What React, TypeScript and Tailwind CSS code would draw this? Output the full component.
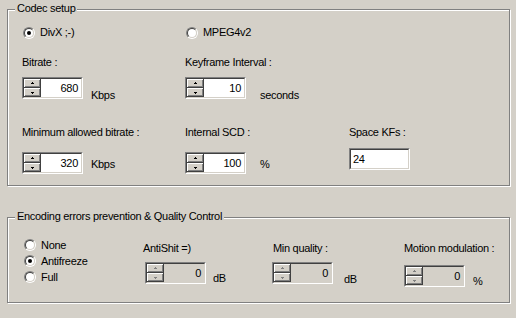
import React from 'react';

const txt = "font-['Liberation_Sans',Arial,sans-serif] text-[11px] leading-[13px] tracking-[-0.3px] text-black";

function Radio({ checked }: { checked?: boolean }) {
  return (
    <span className="inline-block w-[12px] h-[12px] shrink-0 rounded-full border border-t-[#808080] border-l-[#808080] border-r-white border-b-white">
      <span className="flex w-[10px] h-[10px] items-center justify-center rounded-full border border-t-[#404040] border-l-[#404040] border-r-[#d4d0c8] border-b-[#d4d0c8] bg-white">
        {checked && <span className="w-[4px] h-[4px] rounded-full bg-black" />}
      </span>
    </span>
  );
}

function RadioItem({ label, checked, className = '' }: { label: string; checked?: boolean; className?: string }) {
  return (
    <div className={`flex items-center gap-[5px] ${className}`}>
      <Radio checked={checked} />
      <span className={txt}>{label}</span>
    </div>
  );
}

function Sunken({ className = '', disabled, children }: { className?: string; disabled?: boolean; children?: React.ReactNode }) {
  return (
    <div className={`border border-t-[#808080] border-l-[#808080] border-r-white border-b-white ${className}`}>
      <div
        className={`h-full border border-t-[#404040] border-l-[#404040] border-r-[#d4d0c8] border-b-[#d4d0c8] ${
          disabled ? 'bg-[#d4d0c8]' : 'bg-white'
        }`}
      >
        {children}
      </div>
    </div>
  );
}

function Arrow({ up, disabled }: { up?: boolean; disabled?: boolean }) {
  const fill = disabled ? '#808080' : '#000';
  return (
    <svg width="5" height="3" viewBox="0 0 5 3" shapeRendering="crispEdges">
      {up ? (
        <>
          <rect x="2" y="0" width="1" height="1" fill={fill} />
          <rect x="1" y="1" width="3" height="1" fill={fill} />
        </>
      ) : (
        <>
          <rect x="1" y="1" width="3" height="1" fill={fill} />
          <rect x="2" y="2" width="1" height="1" fill={fill} />
        </>
      )}
    </svg>
  );
}

function SpinButton({ up, disabled }: { up?: boolean; disabled?: boolean }) {
  return (
    <div className="flex h-[9px] items-center justify-center bg-[#d4d0c8] shadow-[inset_-1px_-1px_0_#404040,inset_1px_1px_0_#fff,inset_-2px_-2px_0_#808080]">
      <Arrow up={up} disabled={disabled} />
    </div>
  );
}

function Spin({ value, disabled, className = '' }: { value: string; disabled?: boolean; className?: string }) {
  return (
    <Sunken className={`w-[61px] h-[22px] shrink-0 ${className}`} disabled={disabled}>
      <div className="flex h-full">
        <div className="flex w-[17px] flex-col">
          <SpinButton up disabled={disabled} />
          <SpinButton disabled={disabled} />
        </div>
        <div className={`flex flex-1 items-center justify-end pr-[3px] ${txt} ${disabled ? 'text-[#808080]' : ''}`}>
          {value}
        </div>
      </div>
    </Sunken>
  );
}

function GroupBox({ title, className = '', children }: { title: string; className?: string; children?: React.ReactNode }) {
  return (
    <div className={`relative ml-[7px] w-[503px] border border-[#808080] shadow-[inset_1px_1px_0_#fff,1px_1px_0_#fff] ${className}`}>
      <span className={`absolute left-[7px] top-[-8px] bg-[#d4d0c8] px-[2px] ${txt}`}>{title}</span>
      {children}
    </div>
  );
}

export default function App() {
  return (
    <div className="w-[516px] h-[318px] overflow-hidden bg-[#d4d0c8] pt-[9px]">
      <GroupBox title="Codec setup" className="h-[177px]">
        <div className="grid grid-cols-[163px_164px_1fr] pl-[14px]">
          <RadioItem label="DivX ;-)" checked className="ml-[1px] mt-[16px] h-[13px]" />
          <RadioItem label="MPEG4v2" className="ml-[1px] mt-[16px] h-[13px]" />
          <div />

          <span className={`mt-[17px] ${txt}`}>Bitrate :</span>
          <span className={`mt-[17px] ${txt}`}>Keyframe Interval :</span>
          <div />

          <div className="mt-[8px] flex items-start">
            <Spin value="680" />
            <span className={`ml-[8px] mt-[12px] ${txt}`}>Kbps</span>
          </div>
          <div className="mt-[8px] flex items-start">
            <Spin value="10" />
            <span className={`ml-[14px] mt-[12px] ${txt}`}>seconds</span>
          </div>
          <div />

          <span className={`mt-[24px] ${txt}`}>Minimum allowed bitrate :</span>
          <span className={`mt-[24px] ${txt}`}>Internal SCD :</span>
          <span className={`mt-[24px] ${txt}`}>Space KFs :</span>

          <div className="mt-[13px] flex items-start">
            <Spin value="320" />
            <span className={`ml-[8px] mt-[6px] ${txt}`}>Kbps</span>
          </div>
          <div className="mt-[13px] flex items-start">
            <Spin value="100" />
            <span className={`ml-[14px] mt-[6px] ${txt}`}>%</span>
          </div>
          <div className="mt-[9px]">
            <Sunken className="w-[61px] h-[22px]">
              <div className={`flex h-full items-center pl-[2px] ${txt}`}>24</div>
            </Sunken>
          </div>
        </div>
      </GroupBox>

      <GroupBox title="Encoding errors prevention & Quality Control" className="mt-[31px] h-[86px]">
        <div className="flex pl-[16px]">
          <div className="mt-[19px] flex w-[119px] flex-col">
            <RadioItem label="None" className="h-[16px]" />
            <RadioItem label="Antifreeze" checked className="h-[16px]" />
            <RadioItem label="Full" className="h-[16px]" />
          </div>

          <div className="mt-[24px] flex w-[129px] flex-col">
            <span className={txt}>AntiShit =)</span>
            <div className="mt-[7px] ml-[2px] flex items-start">
              <Spin value="0" disabled />
              <span className={`ml-[7px] mt-[10px] ${txt}`}>dB</span>
            </div>
          </div>

          <div className="mt-[24px] flex w-[132px] flex-col">
            <span className={`ml-[1px] ${txt}`}>Min quality :</span>
            <div className="mt-[7px] flex items-start">
              <Spin value="0" disabled />
              <span className={`ml-[11px] mt-[11px] ${txt}`}>dB</span>
            </div>
          </div>

          <div className="mt-[24px] flex flex-col">
            <span className={txt}>Motion modulation :</span>
            <div className="mt-[10px] flex items-start">
              <Spin value="0" disabled />
              <span className={`ml-[8px] mt-[10px] ${txt}`}>%</span>
            </div>
          </div>
        </div>
      </GroupBox>
    </div>
  );
}
